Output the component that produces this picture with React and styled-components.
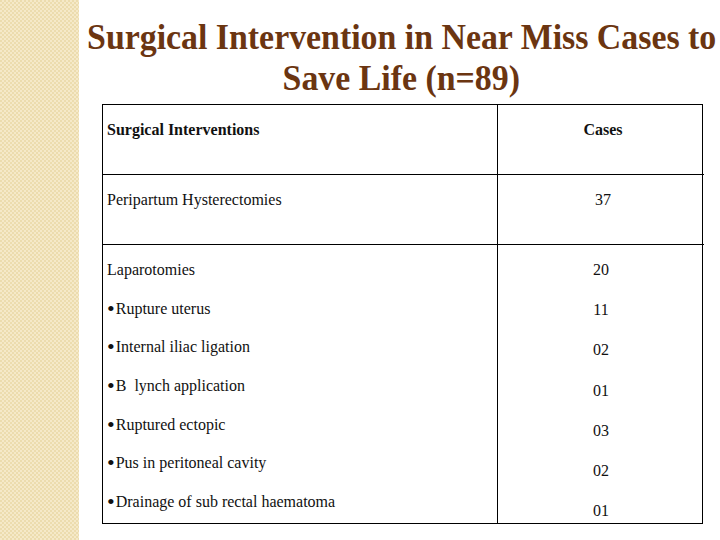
import React from 'react';
import styled, { createGlobalStyle } from 'styled-components';

const GlobalStyle = createGlobalStyle`
  html, body { margin: 0; padding: 0; background: #fff; }
  body { font-family: "Liberation Serif", "Times New Roman", serif; }
`;

const rows = [
  { name: 'Peripartum Hysterectomies', cases: '37' },
];

const detail = [
  { text: 'Laparotomies' },
  { text: 'Rupture uterus', bullet: true },
  { text: 'Internal iliac ligation', bullet: true },
  { text: 'B  lynch application', bullet: true },
  { text: 'Ruptured ectopic', bullet: true },
  { text: 'Pus in peritoneal cavity', bullet: true },
  { text: 'Drainage of sub rectal haematoma', bullet: true },
];
const detailCases = ['20', '11', '02', '01', '03', '02', '01'];

export default function App() {
  return (
    <>
      <GlobalStyle />
      <Slide>
        <Stripe />
        <Main>
          <Title>
            <TitleLine>Surgical Intervention in Near Miss Cases to</TitleLine>
            <TitleLine>Save Life (n=89)</TitleLine>
          </Title>
          <Table>
            <Cell $head>Surgical Interventions</Cell>
            <Cell $head $center $right>Cases</Cell>
            {rows.map((r) => (
              <React.Fragment key={r.name}>
                <Cell>{r.name}</Cell>
                <Cell $center $right>{r.cases}</Cell>
              </React.Fragment>
            ))}
            <ListCell>
              {detail.map((d) => (
                <Line key={d.text} $h={38.7}>
                  {d.bullet && <Bullet>{'\u2022'}</Bullet>}
                  {d.text}
                </Line>
              ))}
            </ListCell>
            <ListCell $center $right>
              {detailCases.map((c, i) => (
                <Line key={i} $h={40.2}>{c}</Line>
              ))}
            </ListCell>
          </Table>
        </Main>
      </Slide>
    </>
  );
}

const Slide = styled.div`
  width: 720px;
  height: 540px;
  display: flex;
  overflow: hidden;
`;

const Stripe = styled.div`
  width: 79px;
  flex: none;
  background-color: #efdfb3;
  background-image: repeating-conic-gradient(#f5e9c8 0 25%, #ecdcae 0 50%);
  background-size: 4px 4px;
`;

const Main = styled.div`
  flex: 1;
  min-width: 0;
  display: flex;
  flex-direction: column;
  align-items: flex-start;
`;

const Title = styled.h1`
  margin: 0;
  align-self: stretch;
  padding: 17px 0 0 4px;
  display: flex;
  flex-direction: column;
  align-items: center;
  font-family: "Liberation Serif", "Times New Roman", serif;
  font-weight: bold;
  font-size: 36px;
  line-height: 41px;
  color: #6b3511;
  white-space: nowrap;
`;

const TitleLine = styled.span`
  display: block;
  transform: scaleX(0.94);
`;

const Table = styled.div`
  margin: 5px 0 0 23px;
  width: 601px;
  display: grid;
  grid-template-columns: 394px 207px;
  border: 1.5px solid #000;
  box-sizing: border-box;
  color: #111;
  font-family: "Liberation Serif", "Times New Roman", serif;
  font-size: 16px;
`;

const Cell = styled.div`
  height: 70px;
  box-sizing: border-box;
  padding: 16px 0 0 4px;
  line-height: 18px;
  font-weight: ${(p) => (p.$head ? 'bold' : 'normal')};
  text-align: ${(p) => (p.$center ? 'center' : 'left')};
  border-bottom: 1.5px solid #000;
  border-left: ${(p) => (p.$right ? '1.5px solid #000' : 'none')};
`;

const ListCell = styled.div`
  height: 278px;
  box-sizing: border-box;
  padding: ${(p) => (p.$center ? '5px 0 0 0' : '6px 0 0 4px')};
  text-align: ${(p) => (p.$center ? 'center' : 'left')};
  border-left: ${(p) => (p.$right ? '1.5px solid #000' : 'none')};
`;

const Line = styled.div`
  height: ${(p) => p.$h}px;
  line-height: ${(p) => p.$h}px;
  white-space: pre;
`;

const Bullet = styled.span`
  font-size: 22px;
  line-height: 0;
  vertical-align: -2px;
  margin-right: 1px;
`;
